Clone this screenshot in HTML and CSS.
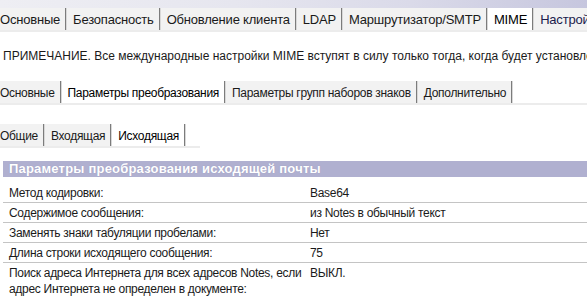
FILE: index.html
```html
<!DOCTYPE html>
<html lang="ru">
<head>
<meta charset="utf-8">
<link rel="stylesheet" href="styles.css">
</head>
<body>
<div class="banner"></div>
<div class="tabs tabs-main">
  <div class="tab">Основные</div>
  <div class="tab">Безопасность</div>
  <div class="tab">Обновление клиента</div>
  <div class="tab">LDAP</div>
  <div class="tab">Маршрутизатор/SMTP</div>
  <div class="tab active">MIME</div>
  <div class="tab last">Настройки</div>
</div>
<p class="note">ПРИМЕЧАНИЕ. Все международные настройки MIME вступят в силу только тогда, когда будет установлен</p>
<div class="tabs tabs-sub">
  <div class="tab">Основные</div>
  <div class="tab active">Параметры преобразования</div>
  <div class="tab">Параметры групп наборов знаков</div>
  <div class="tab">Дополнительно</div>
</div>
<div class="tabs tabs-third">
  <div class="tab">Общие</div>
  <div class="tab">Входящая</div>
  <div class="tab active">Исходящая</div>
</div>
<section class="panel">
  <h2 class="panel-title">Параметры преобразования исходящей почты</h2>
  <div class="rows">
    <div class="row"><div class="label">Метод кодировки:</div><div class="value">Base64</div></div>
    <div class="row"><div class="label">Содержимое сообщения:</div><div class="value">из Notes в обычный текст</div></div>
    <div class="row"><div class="label">Заменять знаки табуляции пробелами:</div><div class="value">Нет</div></div>
    <div class="row"><div class="label">Длина строки исходящего сообщения:</div><div class="value">75</div></div>
    <div class="row last"><div class="label">Поиск адреса Интернета для всех адресов Notes, если адрес Интернета не определен в документе:</div><div class="value">ВЫКЛ.</div></div>
  </div>
</section>
</body>
</html>
```
FILE: styles.css
```css
html, body {
  margin: 0;
  padding: 0;
  background: #ffffff;
}
body {
  width: 587px;
  height: 304px;
  overflow: hidden;
  font-family: "Liberation Sans", Arial, sans-serif;
  font-size: 12px;
  letter-spacing: -0.3px;
  color: #1a1a1a;
}
.banner {
  height: 8px;
  background: linear-gradient(90deg, #eeeef3 0%, #e6e6ef 40%, #dadae9 70%, #c6c6de 100%);
}
.tabs {
  display: flex;
  white-space: nowrap;
  border-bottom: 2px solid #ececec;
  overflow: hidden;
}
.tab {
  flex: none;
  background: #f2f2f2;
  padding: 2px 5px 0 6px;
  height: 20px;
  line-height: 20px;
  border-right: 1px solid #7c7c7c;
  box-shadow: 1px 0 0 #d8d8d8;
  margin-right: 1px;
}
.tab:first-child {
  padding-left: 0;
}
.tab.active {
  background: #ffffff;
  color: #000;
}
.tab.last {
  color: #1c1c4c;
  border-right: none;
  box-shadow: none;
}
.tabs-main {
  width: 587px;
  font-size: 13px;
  letter-spacing: -0.2px;
}
.note {
  margin: 16px 0 0 3px;
  white-space: nowrap;
  line-height: 16px;
  letter-spacing: 0;
  overflow: hidden;
}
.tabs-sub {
  margin-top: 17px;
}
.tabs-third {
  margin-top: 19px;
  width: 200px;
}
.panel {
  margin: 13px 0 0 3px;
}
.panel-title {
  margin: 0;
  background: #b0b0d0;
  color: #ffffff;
  font-size: 13px;
  font-weight: bold;
  letter-spacing: 0.2px;
  line-height: 16px;
  padding: 0 6px;
  text-shadow: 0 0 1px #9494b8;
}
.rows {
  margin-top: 6px;
}
.row {
  display: grid;
  grid-template-columns: 301px 1fr;
  border-bottom: 1px solid #c4c4c4;
  padding: 2px 0 1px 6px;
  line-height: 16px;
}
.row.last {
  border-bottom: none;
}
.label {
  padding-right: 8px;
}
```
